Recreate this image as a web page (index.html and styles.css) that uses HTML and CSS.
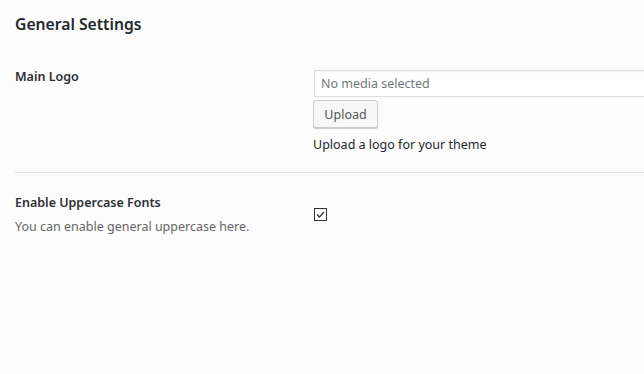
FILE: index.html
```html
<!DOCTYPE html>
<html>
<head>
<meta charset="utf-8">
<link rel="stylesheet" href="styles.css">
</head>
<body>
<div class="page">
  <h2 class="title">General Settings</h2>
  <div class="row row-logo">
    <div class="label-col">
      <div class="label">Main Logo</div>
    </div>
    <div class="field-col">
      <input class="media-input" type="text" placeholder="No media selected">
      <button class="btn">Upload</button>
      <p class="help">Upload a logo for your theme</p>
    </div>
  </div>
  <div class="sep"></div>
  <div class="row row-upper">
    <div class="label-col">
      <div class="label">Enable Uppercase Fonts</div>
      <div class="desc">You can enable general uppercase here.</div>
    </div>
    <div class="field-col">
      <span class="check">
        <svg width="13" height="13" viewBox="0 0 13 13"><rect x="0.5" y="0.5" width="12" height="12" fill="#fff" stroke="#333"/><path d="M3 6.5 L5.4 9 L10 4" fill="none" stroke="#333" stroke-width="1.3"/></svg>
      </span>
    </div>
  </div>
</div>
</body>
</html>
```
FILE: styles.css
```css
html, body {
  margin: 0;
  padding: 0;
  background: #fcfcfc;
}
body {
  font-family: "Noto Sans", "Open Sans", sans-serif;
  font-size: 12.5px;
  color: #23282d;
  overflow: hidden;
}
.page {
  padding: 12px 0 0 15px;
}
.title {
  margin: 0;
  font-size: 15.7px;
  font-weight: 600;
  line-height: 24px;
  color: #23282d;
}
.row {
  display: flex;
}
.row-logo {
  padding-top: 34px;
}
.label-col {
  width: 298px;
  flex: none;
}
.label {
  font-weight: 600;
  line-height: 18px;
  margin-top: -2px;
  color: #2c3035;
}
.field-col {
  flex: 1;
  display: flex;
  flex-direction: column;
  align-items: flex-start;
}
.media-input {
  box-sizing: border-box;
  width: 340px;
  height: 27px;
  margin: 0 0 0 1px;
  padding: 0 6px;
  border: 1px solid #ddd;
  background: #fff;
  font-family: inherit;
  font-size: 12.5px;
  color: #32373c;
  outline: none;
  box-shadow: inset 0 1px 2px rgba(0,0,0,0.04);
}
.media-input::placeholder {
  color: #72777c;
}
.btn {
  margin-top: 3px;
  box-sizing: border-box;
  width: 65px;
  height: 28px;
  padding: 0 10px;
  border: 1px solid #ccc;
  border-radius: 3px;
  background: #f7f7f7;
  box-shadow: 0 1px 0 #ccc;
  font-family: inherit;
  font-size: 12.5px;
  color: #555;
}
.help {
  margin: 8px 0 0 0;
  line-height: 18px;
  color: #23282d;
}
.sep {
  height: 1px;
  background: #e1e1e1;
  margin-top: 18px;
}
.row-upper {
  padding-top: 23px;
}
.desc {
  margin-top: 6px;
  color: #666;
  line-height: 18px;
}
.check {
  display: block;
  margin: 12px 0 0 1px;
  width: 13px;
  height: 13px;
}
.check svg {
  display: block;
}
```
